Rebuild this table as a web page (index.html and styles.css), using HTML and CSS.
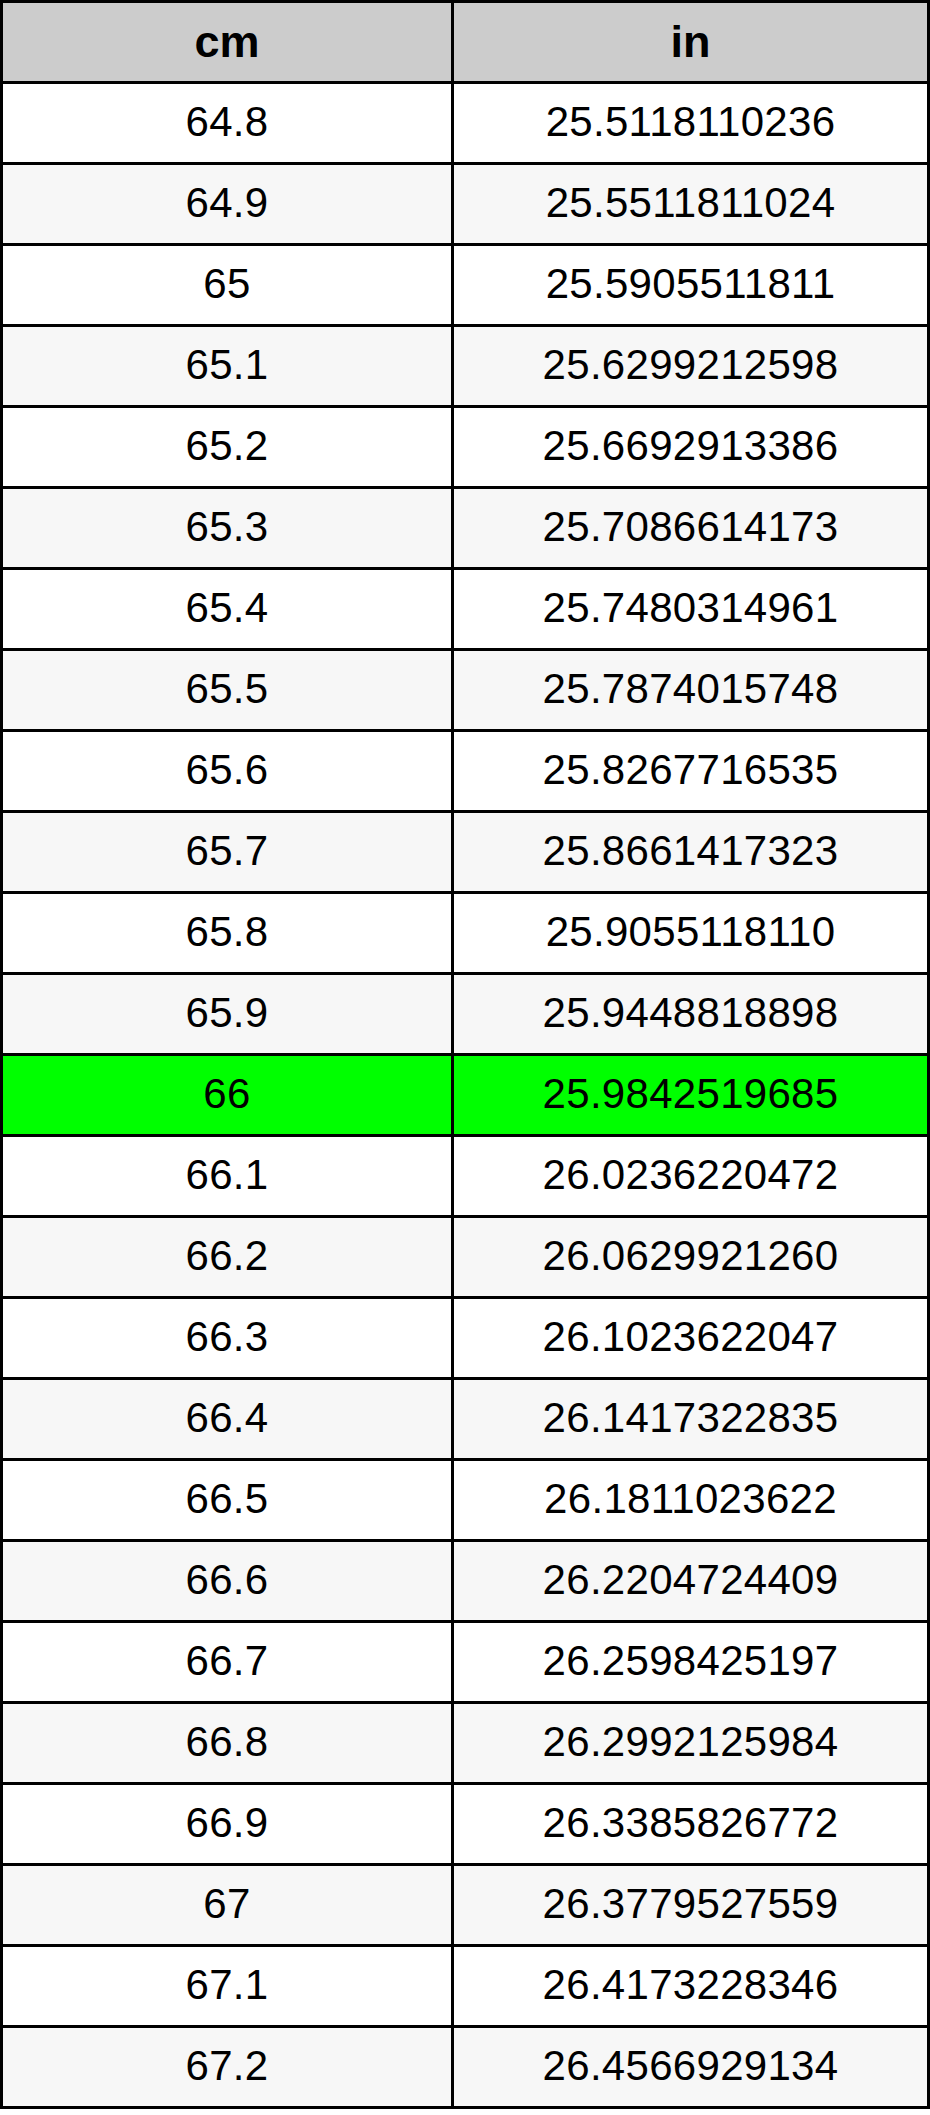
FILE: index.html
```html
<!DOCTYPE html>
<html>
<head>
<meta charset="utf-8">
<title>cm to in</title>
<link rel="stylesheet" href="styles.css">
</head>
<body>
<table class="conv">
<thead>
<tr><th class="c1">cm</th><th class="c2">in</th></tr>
</thead>
<tbody>
<tr><td>64.8</td><td>25.5118110236</td></tr>
<tr class="alt"><td>64.9</td><td>25.5511811024</td></tr>
<tr><td>65</td><td>25.5905511811</td></tr>
<tr class="alt"><td>65.1</td><td>25.6299212598</td></tr>
<tr><td>65.2</td><td>25.6692913386</td></tr>
<tr class="alt"><td>65.3</td><td>25.7086614173</td></tr>
<tr><td>65.4</td><td>25.7480314961</td></tr>
<tr class="alt"><td>65.5</td><td>25.7874015748</td></tr>
<tr><td>65.6</td><td>25.8267716535</td></tr>
<tr class="alt"><td>65.7</td><td>25.8661417323</td></tr>
<tr><td>65.8</td><td>25.9055118110</td></tr>
<tr class="alt"><td>65.9</td><td>25.9448818898</td></tr>
<tr class="hl"><td>66</td><td>25.9842519685</td></tr>
<tr><td>66.1</td><td>26.0236220472</td></tr>
<tr class="alt"><td>66.2</td><td>26.0629921260</td></tr>
<tr><td>66.3</td><td>26.1023622047</td></tr>
<tr class="alt"><td>66.4</td><td>26.1417322835</td></tr>
<tr><td>66.5</td><td>26.1811023622</td></tr>
<tr class="alt"><td>66.6</td><td>26.2204724409</td></tr>
<tr><td>66.7</td><td>26.2598425197</td></tr>
<tr class="alt"><td>66.8</td><td>26.2992125984</td></tr>
<tr><td>66.9</td><td>26.3385826772</td></tr>
<tr class="alt"><td>67</td><td>26.3779527559</td></tr>
<tr><td>67.1</td><td>26.4173228346</td></tr>
<tr class="alt"><td>67.2</td><td>26.4566929134</td></tr>
</tbody>
</table>
</body>
</html>
```
FILE: styles.css
```css
html, body {
  margin: 0;
  padding: 0;
  background: #ffffff;
}
body {
  font-family: "Liberation Sans", Arial, sans-serif;
  color: #000000;
}
.conv {
  width: 930px;
  border-collapse: collapse;
  border: 3px solid #000000;
  table-layout: fixed;
}
.conv th,
.conv td {
  border: 3px solid #000000;
  padding: 0;
  text-align: center;
  vertical-align: middle;
}
.conv th {
  height: 78px;
  background: #cccccc;
  font-weight: bold;
  font-size: 45px;
}
.conv td {
  height: 75px;
  padding-bottom: 3px;
  font-size: 42px;
  letter-spacing: 0.3px;
  background: #ffffff;
}
.conv .c1 {
  width: 448px;
}
.conv tr.alt td {
  background: #f7f7f7;
}
.conv tr.hl td {
  background: #00ff00;
}
```
